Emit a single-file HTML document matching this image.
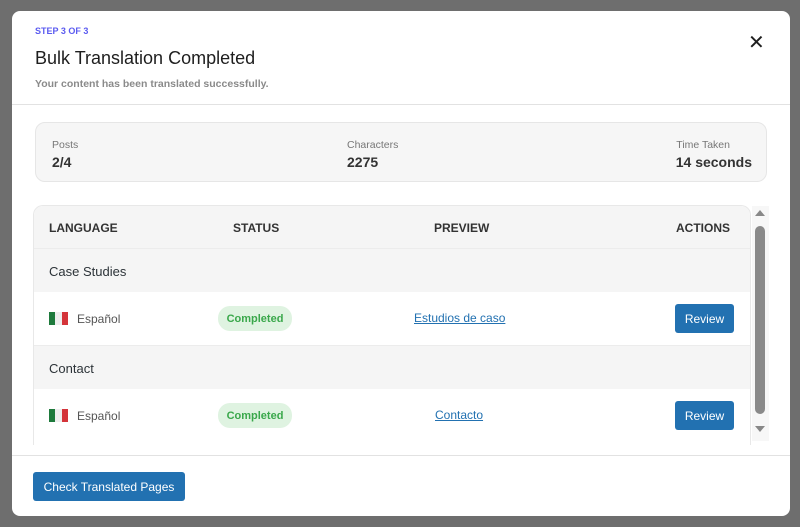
<!DOCTYPE html>
<html><head><meta charset="utf-8"><style>
*{box-sizing:border-box;margin:0;padding:0}
body{width:800px;height:527px;background:#6e6e6e;font-family:"Liberation Sans",sans-serif;position:relative;overflow:hidden;color:#2c3338}
.m{position:absolute;left:12px;top:11px;width:778px;height:505px;background:#fff;border-radius:8px;overflow:hidden}
.a{position:absolute}
.step{left:23px;top:15px;font-size:9px;color:#5b5bf0;font-weight:bold}
h1{position:absolute;left:23px;top:37px;font-size:18px;font-weight:normal;color:#1e1e1e}
.sub{left:23px;top:67px;font-size:10.5px;color:#8a8a8a;font-weight:bold}
.x{left:736px;top:19px;font-size:20px;color:#1e1e1e}
.hr{left:0;width:778px;height:1px;background:#e2e2e2}
.stats{left:23px;top:111px;width:732px;height:60px;background:#f6f6f6;border:1px solid #e6e6e6;border-radius:10px}
.lb{font-size:10.5px;color:#777}
.vl{font-size:14px;font-weight:bold;color:#333}
.tbl{left:21px;top:194px;width:718px;height:240px;border:1px solid #e8e8e8;border-bottom:none;border-radius:10px 10px 0 0;overflow:hidden}
.row{position:absolute;left:0;width:718px}
.th{font-size:11.5px;color:#333;font-weight:bold}
.t{position:absolute;font-size:12px}
.badge{position:absolute;background:#dff3e1;color:#3aa84b;font-size:11px;font-weight:bold;border-radius:12px;width:74px;height:25px;line-height:26px;text-align:center}
.btn{position:absolute;background:#2271b1;color:#fff;font-size:12px;border-radius:3px;width:59px;height:29px;line-height:30px;text-align:center}
.lnk{color:#2271b1;text-decoration:underline}
.flag{position:absolute;width:19px;height:13px;display:flex}
.flag i{flex:1}
</style></head><body>
<div class="m">
<div class="a step">STEP 3 OF 3</div>
<h1>Bulk Translation Completed</h1>
<div class="a sub">Your content has been translated successfully.</div>
<div class="a x">✕</div>
<div class="a hr" style="top:93px"></div>
<div class="a stats">
<div class="a lb" style="left:16px;top:16px">Posts</div><div class="a vl" style="left:16px;top:31px">2/4</div>
<div class="a lb" style="left:311px;top:16px">Characters</div><div class="a vl" style="left:311px;top:31px">2275</div>
<div class="a lb" style="right:36px;top:16px">Time Taken</div><div class="a vl" style="right:14px;top:31px">14 seconds</div>
</div>
<div class="a tbl">
<div class="row" style="top:0;height:43px;background:#f5f5f5;border-bottom:1px solid #ececec">
<div class="t th" style="left:15px;top:15px">LANGUAGE</div>
<div class="t th" style="left:199px;top:15px">STATUS</div>
<div class="t th" style="left:400px;top:15px">PREVIEW</div>
<div class="t th" style="left:642px;top:15px">ACTIONS</div></div>
<div class="row" style="top:43px;height:43px;background:#f5f5f5"><div class="t" style="left:15px;top:15px;font-size:13px">Case Studies</div></div>
<div class="row" style="top:86px;height:54px;border-bottom:1px solid #ececec">
<div class="flag" style="left:15px;top:20px"><i style="background:#1e7a3c"></i><i style="background:#eee"></i><i style="background:#d4343a"></i></div>
<div class="t" style="left:43px;top:20px;color:#555">Español</div>
<div class="badge" style="left:184px;top:14px">Completed</div>
<div class="t lnk" style="left:380px;top:19px">Estudios de caso</div>
<div class="btn" style="left:641px;top:12px">Review</div></div>
<div class="row" style="top:140px;height:43px;background:#f5f5f5"><div class="t" style="left:15px;top:15px;font-size:13px">Contact</div></div>
<div class="row" style="top:183px;height:57px">
<div class="flag" style="left:15px;top:20px"><i style="background:#1e7a3c"></i><i style="background:#eee"></i><i style="background:#d4343a"></i></div>
<div class="t" style="left:43px;top:20px;color:#555">Español</div>
<div class="badge" style="left:184px;top:14px">Completed</div>
<div class="t lnk" style="left:401px;top:19px">Contacto</div>
<div class="btn" style="left:641px;top:12px">Review</div></div>
</div>
<div class="a" style="left:740px;top:195px;width:17px;height:235px;background:#f7f7f7">
<div class="a" style="left:3px;top:4px;width:0;height:0;border-left:5px solid transparent;border-right:5px solid transparent;border-bottom:6px solid #888"></div>
<div class="a" style="left:3px;top:20px;width:10px;height:188px;background:#8a8a8a;border-radius:5px"></div>
<div class="a" style="left:3px;top:220px;width:0;height:0;border-left:5px solid transparent;border-right:5px solid transparent;border-top:6px solid #888"></div></div>
<div class="a hr" style="top:444px"></div>
<div class="btn" style="left:21px;top:461px;width:152px">Check Translated Pages</div>
</div>
</body></html>
